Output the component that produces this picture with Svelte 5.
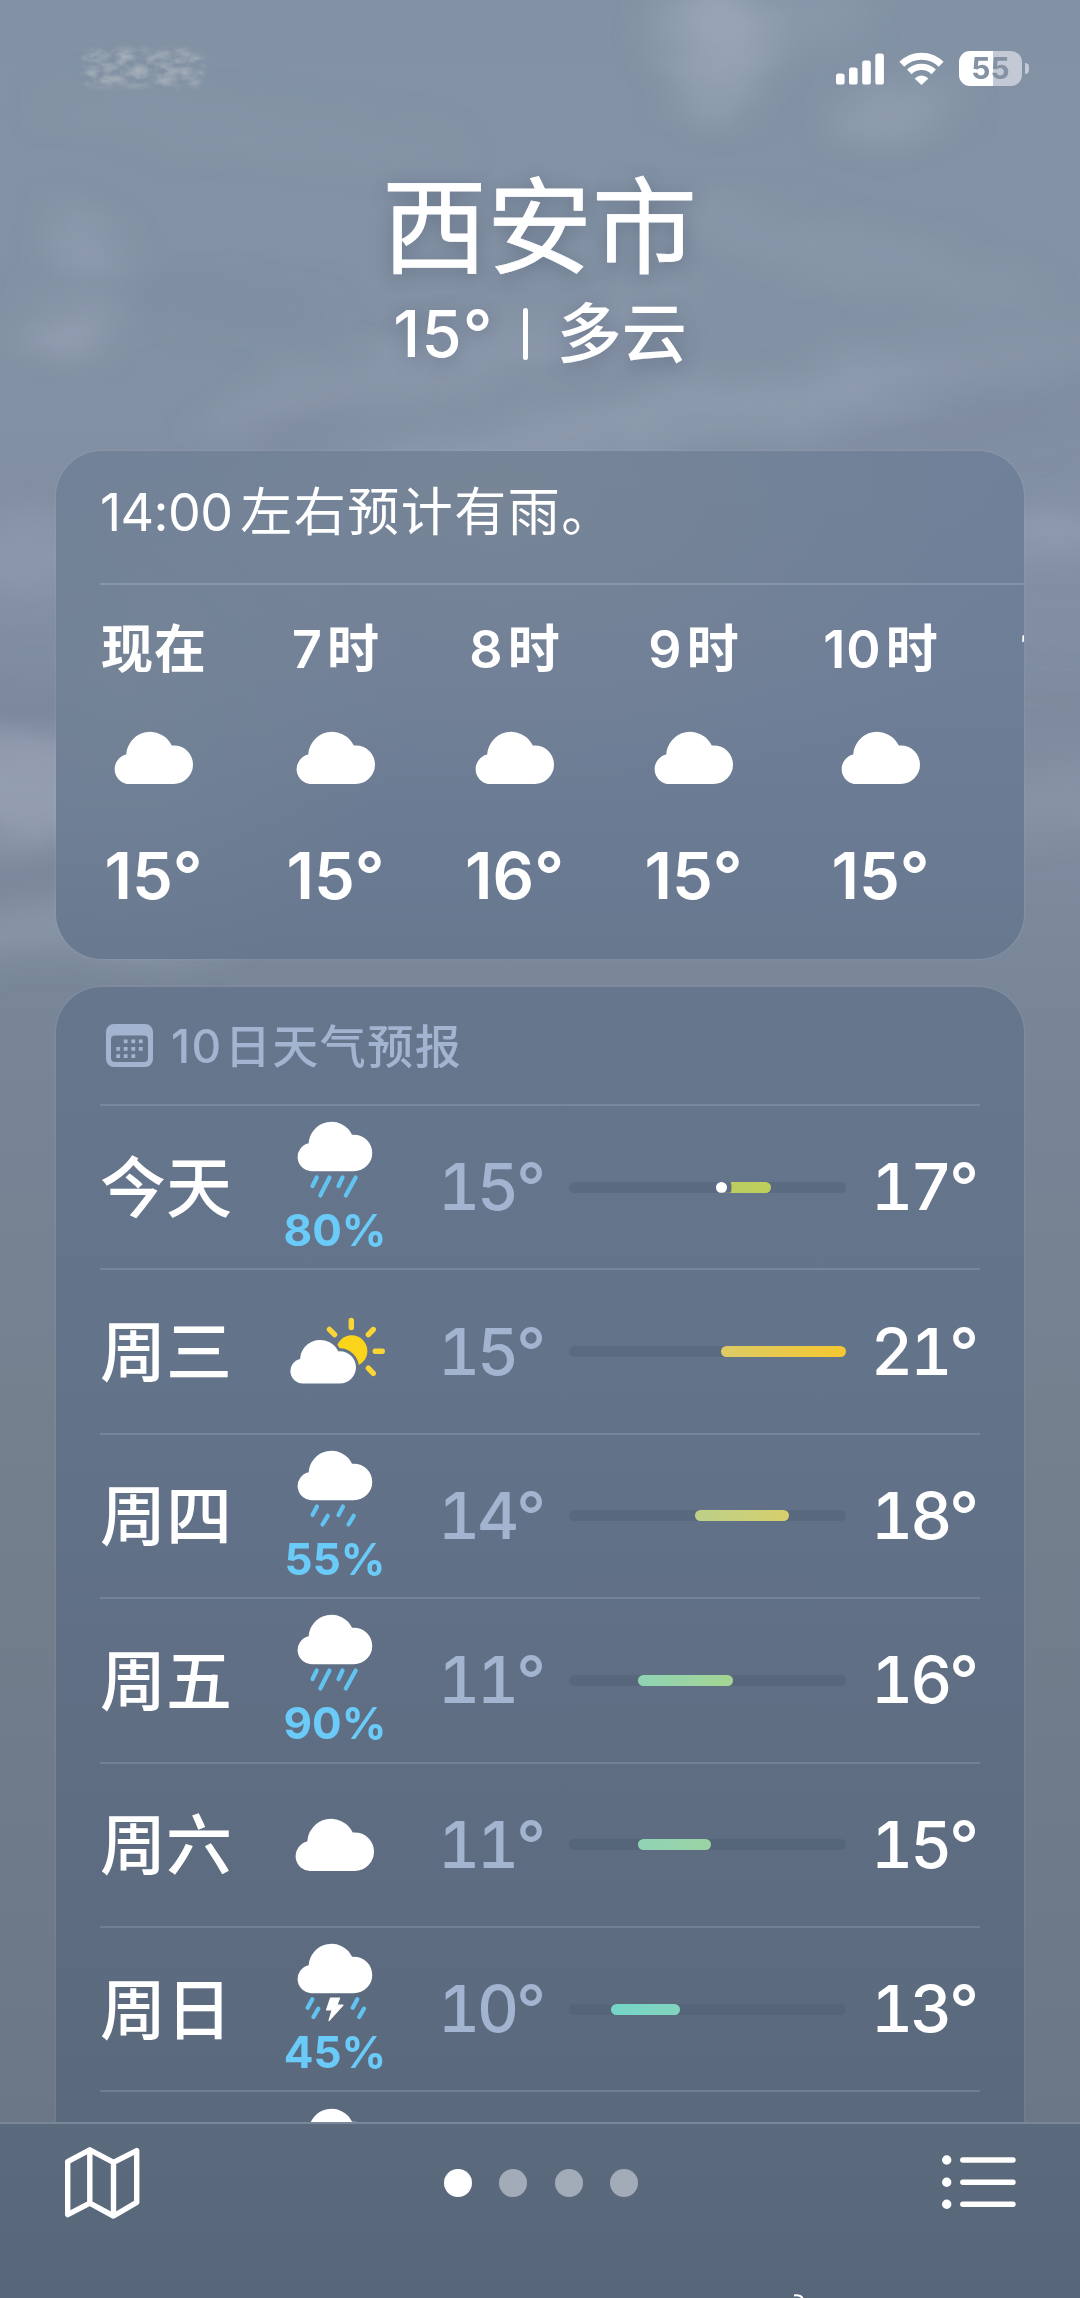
<script>
  const hours = [
    { num: '', label: '现在', temp: 15 },
    { num: '7', label: '时', temp: 15 },
    { num: '8', label: '时', temp: 16 },
    { num: '9', label: '时', temp: 15 },
    { num: '10', label: '时', temp: 15 },
    { num: '11', label: '时', temp: 15 }
  ];

  // from / to are positions on the shared temperature track, in percent
  const days = [
    { name: '今天', icon: 'heavy', rain: 80, low: 15, high: 17, from: 52.9, to: 72.9, a: '#b9cb62', b: '#bfd05a', now: true },
    { name: '周三', icon: 'sun', low: 15, high: 21, from: 55, to: 100, a: '#dccb66', b: '#f6c730' },
    { name: '周四', icon: 'light', rain: 55, low: 14, high: 18, from: 45.5, to: 79.5, a: '#bdd089', b: '#d6cf6c' },
    { name: '周五', icon: 'heavy', rain: 90, low: 11, high: 16, from: 25, to: 59.2, a: '#8fd3b5', b: '#a5d593' },
    { name: '周六', icon: 'cloud', low: 11, high: 15, from: 25, to: 51.2, a: '#8fd3b5', b: '#9ad4a4' },
    { name: '周日', icon: 'storm', rain: 45, low: 10, high: 13, from: 15.1, to: 40.2, a: '#74d5c8', b: '#82d4bd' },
    { name: '周一', icon: 'light', rain: 40, low: 10, high: 14, from: 15.1, to: 45, a: '#74d5c8', b: '#8fd3b5' }
  ];

  const drops = {
    heavy: 'M31.7 55.5L27.5 64M44.5 55.5L35.3 73.5M57.5 55.5L53.5 64M70.7 55.5L60.8 73.5',
    light: 'M32 55.5L27.5 64M42.7 64.8L37.5 73.5M58 55.5L53.5 64M68.7 64.8L63.5 73.5',
    storm: 'M27.3 55.3L22.7 63.7M33.3 64.6L28.5 73M72.3 55.3L67.7 63.7M79 64.6L74.2 73'
  };
  const cloud = 'M15.4 52A14.9 14.9 0 0 1 11.2 22.6A24 24 0 0 1 56.8 13.5Q57.8 13.4 58.7 13.4A19.3 19.3 0 0 1 58.7 52Z';

  // soft light and dark patches of the sky
  const patches = [
    { c: '#a9b3c6', cx: 715, cy: 45, rx: 55, ry: 62, r: -20, o: 0.46 },
    { c: '#a9b3c6', cx: 760, cy: 20, rx: 120, ry: 30, r: 0, o: 0.2 },
    { c: '#a9b3c6', cx: 895, cy: 108, rx: 70, ry: 22, r: -15, o: 0.36 },
    { c: '#a9b3c6', cx: 250, cy: 130, rx: 220, ry: 22, r: 8, o: 0.1 },
    { c: '#a9b3c6', cx: 92, cy: 245, rx: 44, ry: 22, r: 35, o: 0.34 },
    { c: '#a9b3c6', cx: 66, cy: 328, rx: 42, ry: 26, r: 10, o: 0.42 },
    { c: '#a9b3c6', cx: 830, cy: 250, rx: 220, ry: 24, r: 12, o: 0.16 },
    { c: '#a9b3c6', cx: 440, cy: 365, rx: 260, ry: 20, r: -14, o: 0.28 },
    { c: '#a9b3c6', cx: 640, cy: 425, rx: 320, ry: 22, r: -10, o: 0.32 },
    { c: '#a9b3c6', cx: 950, cy: 360, rx: 170, ry: 20, r: -8, o: 0.18 },
    { c: '#6f7b92', cx: 310, cy: 425, rx: 80, ry: 9, r: -25, o: 0.5 },
    { c: '#6f7b92', cx: 970, cy: 425, rx: 150, ry: 14, r: -6, o: 0.26 },
    { c: '#6f7b92', cx: 190, cy: 300, rx: 160, ry: 18, r: 6, o: 0.18 },
    { c: '#a9b3c6', cx: 1050, cy: 535, rx: 60, ry: 20, r: -6, o: 0.4 },
    { c: '#a9b3c6', cx: 20, cy: 560, rx: 90, ry: 34, r: 0, o: 0.26 },
    { c: '#6f7b92', cx: 10, cy: 700, rx: 100, ry: 20, r: 0, o: 0.36 },
    { c: '#b0b8ca', cx: 0, cy: 790, rx: 130, ry: 44, r: 0, o: 0.42 },
    { c: '#6f7b92', cx: 20, cy: 880, rx: 100, ry: 16, r: 0, o: 0.22 },
    { c: '#a9b3c6', cx: 60, cy: 935, rx: 180, ry: 20, r: 0, o: 0.36 },
    { c: '#a9b3c6', cx: 1060, cy: 810, rx: 90, ry: 24, r: 0, o: 0.22 },
    { c: '#6f7b92', cx: 1055, cy: 700, rx: 80, ry: 30, r: 0, o: 0.16 }
  ];
</script>

<div class="screen">
  <svg class="sky" width="1080" height="1100" viewBox="0 0 1080 1100" aria-hidden="true">
    <filter id="wisp" x="-100" y="-100" width="1280" height="1300" filterUnits="userSpaceOnUse">
      <feTurbulence type="fractalNoise" baseFrequency="0.008 0.018" numOctaves="4" seed="7" result="n" />
      <feGaussianBlur in="SourceGraphic" stdDeviation="18" result="b" />
      <feDisplacementMap in="b" in2="n" scale="50" xChannelSelector="R" yChannelSelector="G" />
      <feGaussianBlur stdDeviation="6" />
    </filter>
    <g filter="url(#wisp)">
      {#each patches as p}
        <ellipse cx={p.cx} cy={p.cy} rx={p.rx} ry={p.ry} fill={p.c} opacity={p.o} transform="rotate({p.r} {p.cx} {p.cy})" />
      {/each}
    </g>
  </svg>
  <svg class="smudge" width="134" height="50" viewBox="0 0 134 50" aria-hidden="true">
    <filter id="grain" x="0" y="0" width="134" height="50" filterUnits="userSpaceOnUse">
      <feTurbulence type="fractalNoise" baseFrequency="0.07 0.12" numOctaves="3" seed="4" result="n" />
      <feColorMatrix in="n" values="0 0 0 0 .46  0 0 0 0 .5  0 0 0 0 .54  1.3 0 0 0 -.4" result="c" />
      <feGaussianBlur in="SourceGraphic" stdDeviation="3" result="s" />
      <feComposite in="c" in2="s" operator="in" />
    </filter>
    <rect x="6" y="6" width="122" height="38" rx="12" filter="url(#grain)" />
  </svg>

  <header class="status">
    <svg width="48" height="32" viewBox="0 0 48 32" fill="#fff">
      <rect x="0" y="20.5" width="8.6" height="11" rx="2.6" />
      <rect x="13" y="14.5" width="8.6" height="17" rx="2.6" />
      <rect x="26.2" y="7.5" width="8.6" height="24" rx="2.6" />
      <rect x="39.3" y="0.5" width="8.6" height="31" rx="2.6" />
    </svg>
    <svg width="45" height="33" viewBox="0 0 45 33" fill="none" stroke="#fff">
      <path d="M2.8 12.3A28 28 0 0 1 42.2 12.3" stroke-width="7" />
      <path d="M10.3 19.9A17.4 17.4 0 0 1 34.7 19.9" stroke-width="6.4" />
      <path d="M22.5 33L15.6 26.4Q22.5 20.8 29.4 26.4Z" fill="#fff" stroke="none" />
    </svg>
    <div class="battery"><span>55</span></div>
    <i class="nub"></i>
  </header>

  <section class="place">
    <h1>西安市</h1>
    <p><span class="deg">15°</span><i></i><span class="cond">多云</span></p>
  </section>

  <section class="card hourly">
    <p class="summary"><span class="num">14:00</span>左右预计有雨。</p>
    <div class="hours">
      {#each hours as h}
        <div class="hour">
          <span class="time">{#if h.num}<span class="num">{h.num}</span>{/if}{h.label}</span>
          <svg width="78" height="52" viewBox="0 0 78 52"><path d={cloud} fill="#fff" /></svg>
          <span class="temp">{h.temp}°</span>
        </div>
      {/each}
    </div>
  </section>

  <section class="card daily">
    <h2>
      <svg width="47" height="43" viewBox="0 0 47 43" fill="currentColor">
        <path fill-rule="evenodd" d="M8 0H39a8 8 0 0 1 8 8V35a8 8 0 0 1-8 8H8a8 8 0 0 1-8-8V8a8 8 0 0 1 8-8ZM9 11.5a4 4 0 0 0-4 4V34a4 4 0 0 0 4 4H38a4 4 0 0 0 4-4V15.5a4 4 0 0 0-4-4Z" />
        <path d="M19.7 15.5v3.8M27.3 15.5v3.8M34.8 15.5v3.8M12.2 22.9v3.8M19.7 22.9v3.8M27.3 22.9v3.8M34.8 22.9v3.8M12.2 30.3v3.8M19.7 30.3v3.8M27.3 30.3v3.8" stroke="currentColor" stroke-width="3.8" />
      </svg>
      <span><span class="num">10</span>日天气预报</span>
    </h2>
    {#each days as d}
      <div class="day">
        <span class="name">{d.name}</span>
        <div class="weather">
          {#if d.icon === 'cloud'}
            <svg width="78" height="52" viewBox="0 0 78 52"><path d={cloud} fill="#fff" /></svg>
          {:else if d.icon === 'sun'}
            <svg class="sun" width="100" height="67" viewBox="0 0 100 67">
              <mask id="behind-cloud">
                <rect width="100" height="67" fill="#fff" />
                <path d={cloud} transform="translate(5.7 23) scale(.837)" fill="#000" stroke="#000" stroke-width="7" />
              </mask>
              <circle cx="66.7" cy="34" r="15.7" fill="#fbd51c" mask="url(#behind-cloud)" />
              <path d="M66.3 3.5V10.6M88.3 12.5L83.3 17.6M90.2 34.3H97.3M83.3 51.2L88.3 56.4M44.4 12.4L49.6 17.6" stroke="#fbd535" stroke-width="5.4" stroke-linecap="round" />
              <path d={cloud} transform="translate(5.7 23) scale(.837)" fill="#fff" />
            </svg>
          {:else}
            <svg width="100" height="80" viewBox="0 0 100 80">
              <path d={cloud} transform="translate(13 0) scale(.952 .945)" fill="#fff" />
              <path d={drops[d.icon]} stroke="#62c3f0" stroke-width="4.2" stroke-linecap="round" />
              {#if d.icon === 'storm'}
                <path d="M45.6 54H54.6L51.8 61.2H58L44 76.6L47.2 65.8H41.6Z" fill="#fff" stroke="#fff" stroke-width="1.2" stroke-linejoin="round" />
              {/if}
            </svg>
            <span class="rain">{d.rain}%</span>
          {/if}
        </div>
        <span class="low">{d.low}°</span>
        <div class="track">
          <div class="range" style="margin-left:{d.from}%;width:{d.to - d.from}%;background:linear-gradient(90deg,{d.a},{d.b})">
            {#if d.now}<i></i>{/if}
          </div>
        </div>
        <span class="high">{d.high}°</span>
      </div>
    {/each}
  </section>

  <nav class="toolbar">
    <svg width="76" height="72" viewBox="0 0 75 72" fill="none" stroke="#fff" stroke-width="5.4" stroke-linejoin="round">
      <path d="M3.2 14.6L25.3 2.8L49 15.4L72.2 3.6V55.4L49 69L25.3 56.2L3.2 67.6ZM25.3 2.8V56.2M49 15.4V69" />
    </svg>
    <div class="pages"><i class="on"></i><i></i><i></i><i></i></div>
    <svg width="74" height="54" viewBox="0 0 74 54" fill="#fff" stroke="#fff" stroke-linecap="round">
      <path d="M20.8 5H71M20.8 27.2H71M20.8 49.3H71" stroke-width="5.4" />
      <path d="M4.7 5h.01M4.7 27.2h.01M4.7 49.3h.01" stroke-width="9.4" />
    </svg>
    <svg class="speck" width="12" height="4" viewBox="0 0 12 4"><path d="M1 1.4Q7 .4 9.6 4" fill="none" stroke="#fff" stroke-width="2" /></svg>
  </nav>
</div>

<style>
  :global(body) {
    margin: 0;
  }
  .screen {
    position: relative;
    box-sizing: border-box;
    width: 1080px;
    height: 2298px;
    overflow: hidden;
    display: flex;
    flex-direction: column;
    color: #fff;
    font-family: Inter, 'Noto Sans CJK SC', sans-serif;
    background: linear-gradient(180deg, #8292a4 0, #8391a4 350px, #828ea3 600px, #7f8b9e 850px, #788698 1000px, #75808f 1400px, #6b7686 2122px);
  }
  .sky {
    position: absolute;
    left: 0;
    top: 0;
  }
  .smudge {
    position: absolute;
    left: 76px;
    top: 43px;
  }
  .status,
  .place,
  .card,
  .toolbar {
    position: relative;
  }
  p,
  h1,
  h2 {
    margin: 0;
    font-weight: 400;
  }
  .status {
    display: flex;
    align-items: center;
    justify-content: flex-end;
    height: 35px;
    padding: 51px 51px 0 0;
  }
  .status svg:first-child {
    margin-right: 15px;
  }
  .battery {
    margin-left: 15px;
    width: 63px;
    height: 35px;
    border-radius: 11px;
    text-align: center;
    background: linear-gradient(90deg, #fff 54%, rgba(216, 220, 230, 0.75) 54%);
    color: #8492a4;
    font: 700 30px/35px Inter, sans-serif;
  }
  .nub {
    margin-left: 3px;
    width: 4px;
    height: 11px;
    border-radius: 0 6px 6px 0;
    background: rgba(216, 220, 230, 0.75);
  }
  .place {
    display: flex;
    flex-direction: column;
    align-items: center;
    height: 365px;
    box-sizing: border-box;
    padding-top: 81px;
    text-shadow: 0 4px 18px rgba(60, 70, 95, 0.4);
  }
  h1 {
    margin-right: 1px;
    font-size: 105px;
    line-height: 120px;
    -webkit-text-stroke: 0.8px #fff;
  }
  .place p {
    display: flex;
    align-items: center;
    height: 60px;
    margin-top: 17px;
    font-size: 65px;
    font-weight: 500;
    line-height: 60px;
  }
  .deg {
    letter-spacing: 1.2px;
  }
  .place i {
    width: 5px;
    height: 52px;
    margin: 0 29px 0 29px;
    border-radius: 3px;
    background: #fff;
  }
  .card {
    box-sizing: border-box;
    margin: 0 56px;
    border-radius: 46px;
    overflow: hidden;
    box-shadow: 0 0 0 1.5px rgba(170, 180, 200, 0.13);
  }
  .hourly {
    height: 508px;
    flex: none;
    background:
      radial-gradient(560px 330px at 46% 8%, rgba(122, 135, 150, 0.7), transparent),
      radial-gradient(300px 300px at 6% 45%, rgba(118, 133, 150, 0.7), transparent),
      linear-gradient(180deg, #6f8099 0, #6e7e97 45%, #68788f 100%);
  }
  .summary {
    box-sizing: border-box;
    height: 134px;
    margin-left: 44px;
    padding-top: 32px;
    border-bottom: 2px solid rgba(190, 200, 215, 0.28);
    font-size: 52px;
    line-height: 60px;
    letter-spacing: 1.5px;
  }
  .summary .num {
    margin-right: 8px;
    letter-spacing: -0.6px;
  }
  .hours {
    display: grid;
    grid-template-columns: 100px 94px 94px 94px 110px 110px;
    column-gap: 85px;
    padding-left: 48px;
  }
  .hour {
    display: flex;
    flex-direction: column;
    align-items: center;
    white-space: nowrap;
  }
  .hour:last-child {
    margin-left: -9px;
  }
  .time {
    margin-top: 35px;
    font-size: 52px;
    font-weight: 600;
    line-height: 60px;
    letter-spacing: 1px;
  }
  .time .num {
    margin-right: 4px;
  }
  .hour svg {
    margin: 52px 0 62px;
  }
  .hour svg,
  .weather svg {
    overflow: visible;
  }
  .temp {
    font-size: 65px;
    font-weight: 600;
    line-height: 60px;
  }
  .hour:not(:last-child) .temp {
    margin-left: -1px;
  }
  .daily {
    margin-top: 28px;
    height: 1135px;
    flex: none;
    padding: 0 44px;
    border-radius: 46px 46px 0 0;
    background: linear-gradient(180deg, #66768d 0, #63738a 35%, #5f6e83 65%, #5b697d 100%);
  }
  h2 {
    display: flex;
    align-items: center;
    height: 117px;
    box-sizing: border-box;
    padding: 0 0 0 6px;
    gap: 18px;
    color: #a3b4d0;
    font-size: 46px;
    font-weight: 500;
    line-height: 60px;
    letter-spacing: 1.5px;
  }
  h2 .num {
    margin-right: 2px;
  }
  .day {
    box-sizing: border-box;
    height: 164.4px;
    border-top: 2px solid rgba(170, 185, 205, 0.27);
    display: grid;
    grid-template-columns: 185px 100px 53px 103px 28px 277px 1fr;
    align-items: center;
    font-size: 65px;
    font-weight: 500;
    line-height: 70px;
    font-feature-settings: 'tnum';
    white-space: nowrap;
  }
  .name {
    font-size: 66px;
    line-height: 70px;
    margin-bottom: -1px;
  }
  .weather {
    grid-column: 2;
    height: 130px;
    display: flex;
    flex-direction: column;
    align-items: center;
    justify-content: center;
  }
  .weather svg {
    flex: none;
  }
  .sun {
    margin-bottom: 3px;
  }
  .rain {
    margin: 3px 0 -3px;
    color: #6bcbf8;
    font-size: 44px;
    font-weight: 700;
    line-height: 50px;
    font-feature-settings: normal;
  }
  .low {
    grid-column: 4;
    color: #a3b4d0;
    letter-spacing: -3px;
  }
  .track {
    grid-column: 6;
    height: 11px;
    border-radius: 6px;
    background: rgba(70, 85, 105, 0.3);
  }
  .range {
    height: 11px;
    border-radius: 6px;
  }
  .range i {
    display: block;
    width: 11px;
    height: 11px;
    border-radius: 50%;
    background: #fff;
    box-shadow: 0 0 0 5px #5e6d83;
    clip-path: inset(0 -5px 0 0);
  }
  .high {
    text-align: right;
    padding-right: 4px;
    letter-spacing: -3px;
  }
  .toolbar {
    box-sizing: border-box;
    height: 176px;
    padding: 23px 64px 0 64px;
    display: flex;
    align-items: flex-start;
    justify-content: space-between;
    border-top: 2px solid #78879a;
    background: linear-gradient(180deg, #5c6a7e, #586679);
  }
  .toolbar > svg:nth-of-type(2) {
    margin-top: 8px;
  }
  .pages {
    display: flex;
    gap: 27.4px;
    margin-top: 22px;
  }
  .pages i {
    width: 28px;
    height: 28px;
    border-radius: 50%;
    background: #a2abb8;
  }
  .pages .on {
    background: #fff;
  }
  .speck {
    position: absolute;
    left: 793px;
    bottom: 0;
  }
</style>
